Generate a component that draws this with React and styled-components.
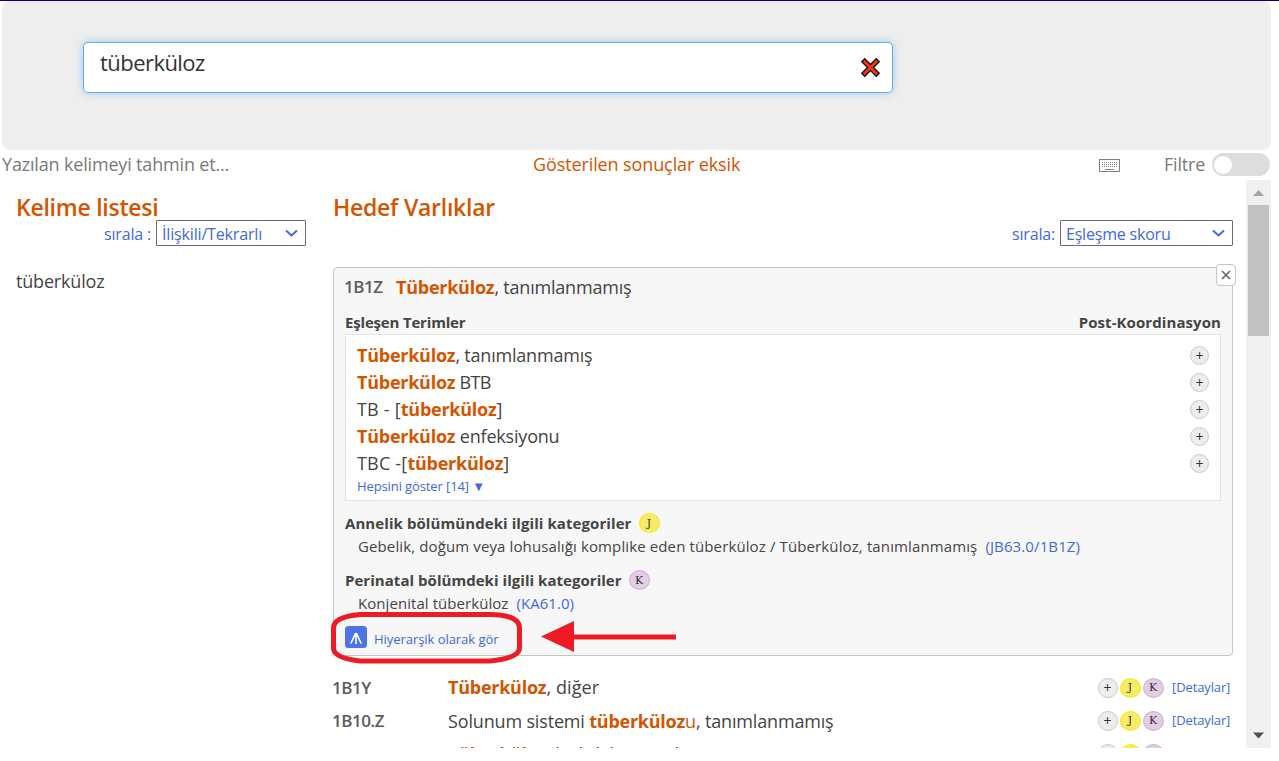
import React from 'react';
import styled, { createGlobalStyle } from 'styled-components';

const BLUE = '#4169e1';
const ORANGE = '#d45500';

const GlobalStyle = createGlobalStyle`
  * { box-sizing: border-box; }
  body {
    margin: 0;
    background: #fff;
    color: #444;
    font-family: "Open Sans", "Noto Sans", sans-serif;
    font-weight: 400;
    font-size: 18px;
    letter-spacing: -0.18px;
    overflow: hidden;
  }
`;

const Page = styled.div`
  position: relative;
  height: 761px;
  border-top: 1px solid #00008b;
  overflow: hidden;
`;

const SearchPanel = styled.header`
  height: 149px;
  margin: 0 8px 0 2px;
  padding: 41px 0 0 81px;
  background: #eee;
  border-radius: 8px;
`;

const SearchBox = styled.div`
  display: flex;
  justify-content: space-between;
  width: 810px;
  height: 51px;
  padding: 0 11px 0 16px;
  background: #fff;
  border: 1px solid #5eaeea;
  border-radius: 5px;
  box-shadow: 0 0 8px rgba(82, 168, 236, 0.5);
`;

const Query = styled.span`
  color: #333;
  font-size: 22px;
  line-height: 38px;
  letter-spacing: -0.55px;
`;

const ClearIcon = styled.svg`
  width: 21px;
  height: 21px;
  margin-top: 14px;
`;

const StatusBar = styled.div`
  display: grid;
  grid-template-columns: 533px 566px 65px 48px 58px;
  align-items: center;
  height: 30px;
  color: #7a7a7a;
  line-height: 28px;
`;

const StatusText = styled.span`
  height: 30px;
`;

const Guess = styled(StatusText)`
  padding-left: 2px;
  letter-spacing: -0.17px;
`;

const Warning = styled(StatusText)`
  color: ${ORANGE};
  letter-spacing: -0.11px;
`;

const KeyboardIcon = styled.svg`
  width: 21px;
  height: 13px;
  margin-top: 1px;
`;

const Toggle = styled.span`
  display: flex;
  align-items: center;
  width: 58px;
  height: 23px;
  margin-top: -1px;
  padding-left: 2px;
  background: #ddd;
  border-radius: 12px;

  &::before {
    content: "";
    width: 18px;
    height: 18px;
    background: #fff;
    border-radius: 50%;
  }
`;

const Results = styled.div`
  display: flex;
  height: 568px;
  overflow: hidden;
`;

const WordColumn = styled.aside`
  width: 333px;
  padding: 13px 27px 0 16px;
`;

const EntityColumn = styled.main`
  width: 900px;
  margin-right: 13px;
  padding-top: 13px;
`;

const Title = styled.h2`
  margin: 0;
  height: 27px;
  color: ${ORANGE};
  font-size: 23px;
  font-weight: 600;
  line-height: 29px;
  letter-spacing: -0.25px;
`;

const SortRow = styled.div`
  display: flex;
  justify-content: flex-end;
  gap: 5px;
  height: 27px;
  color: ${BLUE};
  font-size: 16px;
  line-height: 28px;
  letter-spacing: -0.18px;
`;

const Select = styled.div`
  display: flex;
  align-items: center;
  justify-content: space-between;
  width: ${(p) => p.$width}px;
  height: 26px;
  padding: 2px 6px 0 5px;
  border: 1px solid #6b6b6b;
  border-radius: 1px;
  letter-spacing: ${(p) => p.$spacing}px;
`;

const Chevron = styled.svg`
  width: 15px;
  height: 10px;
  margin-top: -2px;
`;

const Word = styled.div`
  margin-top: 21px;
  line-height: 27px;
`;

const Card = styled.section`
  position: relative;
  height: 389px;
  margin-top: 20px;
  padding: 5px 11px 0;
  background: #f7f7f7;
  border: 1px solid #c6c6c6;
  border-radius: 4px;
`;

const CloseButton = styled.button`
  position: absolute;
  top: -4px;
  right: -4px;
  display: flex;
  align-items: center;
  justify-content: center;
  width: 20px;
  height: 22px;
  padding: 0 1px 0 0;
  background: #fff;
  border: 1px solid #c6c6c6;
  border-radius: 4px;
`;

const CardTitle = styled.div`
  display: flex;
  height: 29px;
  line-height: 28px;
`;

const Code = styled.span`
  width: ${(p) => p.$width}px;
  color: #5c5c5c;
  font-size: 17px;
  font-weight: 600;
  letter-spacing: -0.45px;
  text-indent: -1px;
`;

const Match = styled.b`
  color: ${ORANGE};
  font-weight: 700;
  letter-spacing: -0.25px;
`;

const Suffix = styled.span`
  color: ${ORANGE};
`;

const TermsHeader = styled.div`
  display: flex;
  justify-content: space-between;
  height: 32px;
  padding-top: 8px;
  color: #444;
  font-size: 15px;
  font-weight: 700;
  line-height: 24px;
`;

const HeaderLabel = styled.span`
  letter-spacing: ${(p) => p.$spacing}px;
`;

const TermsBox = styled.div`
  height: 167px;
  padding: 7px 11px 0;
  background: #fff;
  border: 1px solid #e4e4e4;
`;

const TermRow = styled.div`
  display: flex;
  align-items: center;
  justify-content: space-between;
  height: 27px;
  line-height: 27px;
`;

const TermText = styled.span`
  letter-spacing: ${(p) => p.$spacing ?? -0.2}px;
`;

const ShowAll = styled.a`
  display: block;
  color: ${BLUE};
  font-size: 13px;
  line-height: 18px;
  letter-spacing: -0.11px;
`;

const PALETTE = {
  '+': { bg: '#ededed', edge: '#c9c9c9' },
  J: { bg: '#f7ec65', edge: '#f2ea1d' },
  K: { bg: '#e2cde2', edge: '#cfb2d4' },
};

const BadgeCircle = styled.span`
  display: inline-flex;
  align-items: center;
  justify-content: center;
  width: ${(p) => p.$width}px;
  height: ${(p) => (p.$width === 19 ? 19 : 20)}px;
  background: ${(p) => PALETTE[p.$kind].bg};
  border: 1px solid ${(p) => PALETTE[p.$kind].edge};
  border-radius: 50%;
  color: #333;
  font-family: ${(p) => (p.$kind === '+' ? '"Open Sans", sans-serif' : '"DejaVu Serif", serif')};
  font-size: ${(p) => (p.$kind === '+' ? 14 : 11)}px;
  font-weight: 400;
  line-height: 17px;
  letter-spacing: 0;
`;

const CategoryTitle = styled.div`
  display: flex;
  align-items: center;
  gap: 7px;
  height: 24px;
  margin-top: ${(p) => p.$top}px;
  color: #444;
  font-size: 15px;
  font-weight: 700;
  line-height: 24px;
  letter-spacing: ${(p) => p.$spacing}px;
`;

const CategoryText = styled.div`
  display: flex;
  gap: 8px;
  height: 24px;
  padding-left: 13px;
  font-size: 15px;
  line-height: 23px;
  letter-spacing: ${(p) => p.$spacing}px;
`;

const BlueLink = styled.a`
  color: ${BLUE};
`;

const HierarchyLink = styled.a`
  display: flex;
  gap: 7px;
  height: 22px;
  margin-top: 10px;
  color: ${BLUE};
  font-size: 13px;
  line-height: 26px;
  letter-spacing: -0.05px;
`;

const EntityList = styled.div`
  padding-top: 15px;
`;

const EntityRow = styled.div`
  display: flex;
  align-items: center;
  height: 33px;
  line-height: 33px;
`;

const EntityName = styled.span`
  flex: 1;
  padding-top: ${(p) => p.$drop || 0}px;
  letter-spacing: ${(p) => p.$spacing ?? -0.18}px;
`;

const Actions = styled.span`
  display: flex;
  align-items: center;
  gap: 2px;
  padding-right: 3px;
`;

const Details = styled(BlueLink)`
  width: 58px;
  margin-left: 6.5px;
  font-size: 13px;
  letter-spacing: -0.12px;
`;

const ScrollBar = styled.div`
  display: flex;
  flex-direction: column;
  justify-content: space-between;
  width: 25px;
  background: #f0f0f0;
`;

const Thumb = styled.div`
  width: 21px;
  height: 131px;
  margin: 0 2px auto;
  background: #c1c1c1;
`;

const ScrollArrow = styled.svg`
  display: block;
  width: 25px;
  height: 25px;
`;

const Annotation = styled.svg`
  position: absolute;
  left: 330px;
  top: 609px;
  width: 350px;
  height: 56px;
  pointer-events: none;
`;

function Badge({ kind, width = 21 }) {
  return <BadgeCircle $kind={kind} $width={width}>{kind}</BadgeCircle>;
}

function Dropdown({ width, spacing, children }) {
  return (
    <Select $width={width} $spacing={spacing}>
      {children}
      <Chevron viewBox="0 0 15 10">
        <path d="M2 2.500 7.500 7.500 13 2.500" fill="none" stroke={BLUE} strokeWidth="2" />
      </Chevron>
    </Select>
  );
}

function Term({ spacing, children }) {
  return (
    <TermRow>
      <TermText $spacing={spacing}>{children}</TermText>
      <Badge kind="+" width={19} />
    </TermRow>
  );
}

function Entity({ code, spacing, drop, children }) {
  return (
    <EntityRow>
      <Code $width={115}>{code}</Code>
      <EntityName $spacing={spacing} $drop={drop}>{children}</EntityName>
      <Actions>
        <Badge kind="+" width={20} />
        <Badge kind="J" />
        <Badge kind="K" />
        <Details>[Detaylar]</Details>
      </Actions>
    </EntityRow>
  );
}

export default function App() {
  return (
    <Page>
      <GlobalStyle />
      <SearchPanel>
        <SearchBox>
          <Query>tüberküloz</Query>
          <ClearIcon viewBox="0 0 22 22" fill="none" strokeLinecap="square">
            <path d="M5 5 17 17M17 5 5 17" stroke="#111" strokeWidth="5.800" />
            <path d="M5 5 17 17M17 5 5 17" stroke="#f0380f" strokeWidth="3" />
          </ClearIcon>
        </SearchBox>
      </SearchPanel>

      <StatusBar>
        <Guess>Yazılan kelimeyi tahmin et...</Guess>
        <Warning>Gösterilen sonuçlar eksik</Warning>
        <KeyboardIcon viewBox="0 0 21 13" fill="none" stroke="#7d8184">
          <rect x="0.5" y="0.5" width="20" height="12" fill="#fff" />
          <path d="M3 3.500h16M3 5.500h16M3 7.500h16" strokeDasharray="1 1" />
          <path d="M6 10.500h9" />
        </KeyboardIcon>
        <StatusText>Filtre</StatusText>
        <Toggle />
      </StatusBar>

      <Results>
        <WordColumn>
          <Title>Kelime listesi</Title>
          <SortRow>
            <span>sırala :</span>
            <Dropdown width={150} spacing={-0.16}>İlişkili/Tekrarlı</Dropdown>
          </SortRow>
          <Word>tüberküloz</Word>
        </WordColumn>

        <EntityColumn>
          <Title>Hedef Varlıklar</Title>
          <SortRow>
            <span>sırala:</span>
            <Dropdown width={173} spacing={-0.2}>Eşleşme skoru</Dropdown>
          </SortRow>

          <Card>
            <CloseButton aria-label="Kapat">
              <svg width="10" height="10" viewBox="0 0 10 10">
                <path d="M1 1 9 9M9 1 1 9" stroke="#666" strokeWidth="1.7" />
              </svg>
            </CloseButton>
            <CardTitle>
              <Code $width={51}>1B1Z</Code>
              <TermText><Match>Tüberküloz</Match>, tanımlanmamış</TermText>
            </CardTitle>
            <TermsHeader>
              <HeaderLabel $spacing={-0.18}>Eşleşen Terimler</HeaderLabel>
              <HeaderLabel $spacing={0.08}>Post-Koordinasyon</HeaderLabel>
            </TermsHeader>
            <TermsBox>
              <Term><Match>Tüberküloz</Match>, tanımlanmamış</Term>
              <Term spacing={-0.6}><Match>Tüberküloz</Match> BTB</Term>
              <Term spacing={0.2}>TB - [<Match>tüberküloz</Match>]</Term>
              <Term><Match>Tüberküloz</Match> enfeksiyonu</Term>
              <Term spacing={0.2}>TBC -[<Match>tüberküloz</Match>]</Term>
              <ShowAll>Hepsini göster [14] ▼</ShowAll>
            </TermsBox>
            <CategoryTitle $top={10} $spacing={0.08}>
              Annelik bölümündeki ilgili kategoriler <Badge kind="J" />
            </CategoryTitle>
            <CategoryText $spacing={0.12}>
              <span>Gebelik, doğum veya lohusalığı komplike eden tüberküloz / Tüberküloz, tanımlanmamış</span>
              <BlueLink>(JB63.0/1B1Z)</BlueLink>
            </CategoryText>
            <CategoryTitle $top={9} $spacing={0.04}>
              Perinatal bölümdeki ilgili kategoriler <Badge kind="K" />
            </CategoryTitle>
            <CategoryText $spacing={0.06}>
              <span>Konjenital tüberküloz</span>
              <BlueLink>(KA61.0)</BlueLink>
            </CategoryText>
            <HierarchyLink>
              <svg width="22" height="22" viewBox="0 0 22 22">
                <rect width="22" height="22" rx="3.5" fill="#4b75e6" />
                <path d="M11 7v11M10.700 7 5.800 17.600M11.300 7l4.900 10.600" fill="none" stroke="#fff" strokeWidth="1.6" />
              </svg>
              Hiyerarşik olarak gör
            </HierarchyLink>
          </Card>

          <EntityList>
            <Entity code="1B1Y" spacing={0.1}><Match>Tüberküloz</Match>, diğer</Entity>
            <Entity code="1B10.Z" spacing={-0.16} drop={1}>
              Solunum sistemi <Match>tüberküloz</Match><Suffix>u</Suffix>, tanımlanmamış
            </Entity>
            <Entity code="1B11" drop={2}><Match>Tüberküloz</Match> ile ilişkili, tanımlanmamış</Entity>
          </EntityList>
        </EntityColumn>

        <ScrollBar>
          <ScrollArrow viewBox="0 0 25 25"><path d="M7 16 12.500 10 18 16z" fill="#a3a3a3" /></ScrollArrow>
          <Thumb />
          <ScrollArrow viewBox="0 0 25 25"><path d="M7 9.500h11L12.500 15.500z" fill="#505050" /></ScrollArrow>
        </ScrollBar>
      </Results>

      <Annotation viewBox="0 0 350 56">
        <path
          d="M30 4.500H160Q189.500 5 189.500 18V38Q189.500 48 160 51H30Q3.500 48 3.500 38V18Q3.500 7 30 4.500Z"
          fill="none"
          stroke="#ed1c24"
          strokeWidth="5"
        />
        <path d="M211 26.500 244 11v13.500h102v5H244V42z" fill="#ed1c24" />
      </Annotation>
    </Page>
  );
}
